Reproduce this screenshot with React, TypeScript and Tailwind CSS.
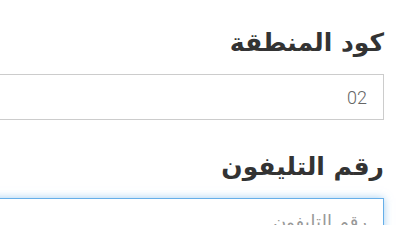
import React from "react";

export default function App() {
  return (
    <div dir="rtl" className="w-[400px] h-[225px] overflow-hidden bg-white pr-4" style={{ fontFamily: '"DejaVu Sans", sans-serif' }}>
      <div className="-ml-6 pt-[24px]">
        <div className="text-[25px] font-bold text-[#333] leading-[38px]">كود المنطقة</div>
        <input
          readOnly
          value="02"
          className="mt-[12px] block w-full h-[46px] border border-[#ccc] bg-white px-4 text-[18px] text-[#666] outline-none"
          style={{ fontFamily: 'Roboto, sans-serif', fontWeight: 300 }}
        />
        <div className="mt-[28px] text-[25px] font-bold text-[#333] leading-[38px]">رقم التليفون</div>
        <input
          placeholder="رقم التليفون"
          className="mt-[12px] block w-full h-[46px] border border-[#66afe9] bg-white px-4 text-[18px] text-[#555] placeholder:text-[#999] outline-none shadow-[0_0_8px_rgba(102,175,233,0.6)]"
        />
      </div>
    </div>
  );
}
